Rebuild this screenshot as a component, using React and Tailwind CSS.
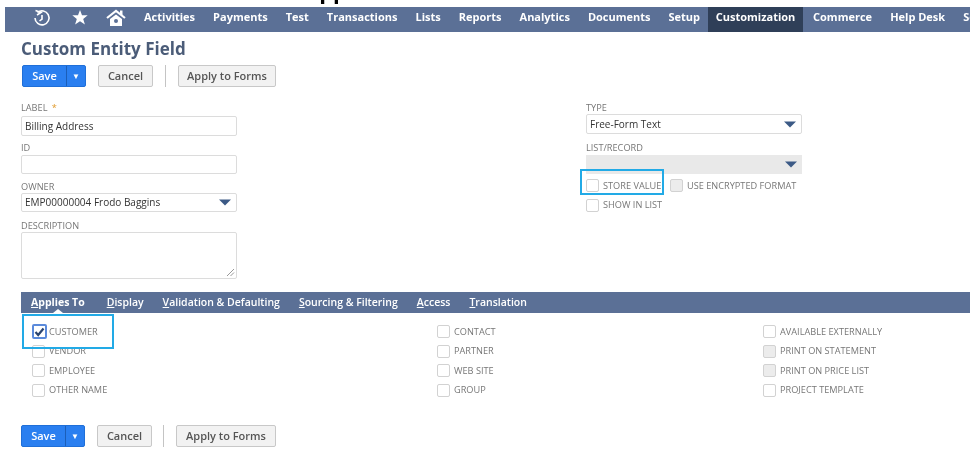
import React from "react";

const font = { fontFamily: '"Open Sans", "Liberation Sans", sans-serif' };

const Arrow = () => (
  <svg width="12" height="7" viewBox="0 0 12 7" className="shrink-0">
    <path d="M0 0.5H12L6 6.5Z" fill="#3c5a86" />
  </svg>
);

function Buttons({ compact }) {
  return (
    <div className="flex items-center">
      <div className="flex h-[22px] w-[64px] items-stretch overflow-hidden rounded-[2px] border border-[#1f6fd8] bg-[#2a7ff0] text-[11px] font-semibold text-white">
        <span className="flex w-[43px] items-center justify-center">Save</span>
        <span className="flex flex-1 items-center justify-center border-l border-[#1b5eb8] text-[8px]">▼</span>
      </div>
      <div className="ml-[12px] flex h-[22px] w-[55px] items-center justify-center rounded-[2px] border border-[#c8c8c8] bg-[#f2f2f2] text-[11px] font-semibold text-[#555]">Cancel</div>
      <div className={`${compact ? "ml-[11px] mr-[12px]" : "ml-[12px] mr-[12px]"} h-[22px] w-px bg-[#c4c4c4]`} />
      <div className={`${compact ? "w-[100px]" : "w-[98px]"} flex h-[22px] items-center justify-center rounded-[2px] border border-[#c8c8c8] bg-[#f2f2f2] text-[11px] font-semibold text-[#555]`}>Apply to Forms</div>
    </div>
  );
}

const Label = ({ children, className = "" }) => (
  <div className={`h-[11px] text-[9.2px] uppercase leading-[11px] text-[#777] ${className}`}>{children}</div>
);

const Box = ({ disabled, checked }) =>
  checked ? (
    <div className="flex h-[15px] w-[15px] shrink-0 items-center justify-center rounded-[2px] border-2 border-[#5b8adb] bg-white">
      <svg width="11" height="10" viewBox="0 0 11 10">
        <path d="M1.5 5L4.2 8L9.5 1.5" fill="none" stroke="#2b4470" strokeWidth="2.2" />
      </svg>
    </div>
  ) : (
    <div className={`h-[13px] w-[13px] shrink-0 rounded-[2px] border border-[#d2d2d2] ${disabled ? "bg-[#ececec]" : "bg-white"}`} />
  );

const Check = ({ children, disabled, checked }) => (
  <div className="flex h-[19.5px] items-center">
    <Box disabled={disabled} checked={checked} />
    <span className={`${checked ? "ml-[2px]" : "ml-[4px]"} text-[9.2px] uppercase text-[#777]`}>{children}</span>
  </div>
);

const fieldCls = "flex w-[216px] items-center rounded-[2px] border border-[#dcdcdc] bg-white px-[3px] text-[10px] text-[#333]";

const nav = ["Activities", "Payments", "Test", "Transactions", "Lists", "Reports", "Analytics", "Documents", "Setup"];
const tabs = [
  ["D", "isplay"],
  ["V", "alidation & Defaulting"],
  ["S", "ourcing & Filtering"],
  ["A", "ccess"],
  ["T", "ranslation"],
];

export default function App() {
  return (
    <div className="relative h-[467px] w-[975px] overflow-hidden bg-white blur-[0.6px]" style={font}>
      {/* clipped line of text above the frame */}
      <div className="absolute left-[304px] top-0 h-[4px] w-[60px] overflow-hidden">
        <div className="-mt-[23px] text-[22px] font-bold leading-[26px] text-black">Applies</div>
      </div>

      {/* top nav */}
      <div className="ml-[5px] mt-[7px] flex h-[25px] w-[965px] items-stretch overflow-hidden bg-[#5b7096] text-[11px] font-bold text-white">
        <div className="flex items-center pb-[4px]">
          <svg width="20" height="18" viewBox="0 0 20 18" className="ml-[27px] shrink-0" fill="none" stroke="#fff" strokeWidth="1.6">
            <path d="M5.5 3.5A7 7 0 1 1 3 9" />
            <path d="M3.5 1.5L9 3.5L5 6" />
            <path d="M10 6V10L7.5 12" />
          </svg>
          <svg width="16" height="15" viewBox="0 0 16 15" className="ml-[20px] shrink-0">
            <path d="M8 0L10 5.3H15.7L11.2 8.9L12.9 14.6L8 11.3L3.1 14.6L4.8 8.9L0.3 5.3H6Z" fill="#fff" />
          </svg>
          <svg width="20" height="18" viewBox="0 0 20 18" className="ml-[18px] shrink-0">
            <path d="M1 9L10 2L19 9" fill="none" stroke="#fff" strokeWidth="2.2" />
            <path d="M14 1.5H16.5V6H14Z" fill="#fff" />
            <path d="M4 10L10 5.5L16 10V17H4Z" fill="#fff" />
            <circle cx="10" cy="12" r="2" fill="#5b7096" />
          </svg>
        </div>
        <div className="ml-[18px] flex items-center gap-[18px] whitespace-nowrap pb-[4px]">
          {nav.map((n) => (
            <span key={n}>{n}</span>
          ))}
        </div>
        <div className="ml-[8px] flex w-[95px] shrink-0 items-center justify-center bg-[#2f3f58] pb-[4px]">Customization</div>
        <div className="ml-[10px] flex items-center gap-[18px] whitespace-nowrap pb-[4px]">
          <span>Commerce</span>
          <span>Help Desk</span>
          <span>Setup</span>
        </div>
      </div>

      <div className="pl-[21px]">
        <h1 className="mt-[6px] h-[21px] text-[17px] font-bold leading-[21px] text-[#4b5c78]">Custom Entity Field</h1>
        <div className="ml-[1px] mt-[6px]"><Buttons /></div>

        {/* form */}
        <div className="mt-[15px] flex">
          <div className="w-[565px]">
            <Label>Label <span className="ml-[2px] text-[#e09a2b]">*</span></Label>
            <div className={`${fieldCls} mt-[3px] h-[20px]`}>Billing Address</div>
            <Label className="mt-[6px]">ID</Label>
            <div className={`${fieldCls} mt-[2px] h-[19px]`} />
            <Label className="mt-[7px]">Owner</Label>
            <div className={`${fieldCls} mt-[1px] h-[19px] justify-between pr-[5px]`}>
              <span>EMP00000004 Frodo Baggins</span>
              <Arrow />
            </div>
            <Label className="mt-[8px]">Description</Label>
            <div className={`${fieldCls} relative mt-[1px] h-[47px]`}>
              <svg width="9" height="9" viewBox="0 0 9 9" className="absolute bottom-[1px] right-[1px]">
                <path d="M1 8L8 1M4.5 8L8 4.5" stroke="#999" strokeWidth="1" />
              </svg>
            </div>
          </div>
          <div className="w-[320px]">
            <Label>Type</Label>
            <div className={`${fieldCls} mt-[1px] h-[20px] justify-between pr-[5px]`}>
              <span>Free-Form Text</span>
              <Arrow />
            </div>
            <Label className="mt-[8px]">List/Record</Label>
            <div className="mt-[2px] flex h-[19px] w-[216px] items-center justify-end bg-[#e9e9e9] pr-[5px]">
              <Arrow />
            </div>
            <div className="mt-[2px] flex">
              <div className="w-[84px]"><Check>Store Value</Check></div>
              <Check disabled>Use Encrypted Format</Check>
            </div>
            <Check>Show in List</Check>
          </div>
        </div>

        {/* tabs */}
        <div className="relative mt-[13px] flex h-[21px] w-[949px] items-center bg-[#5b7096] pl-[10px] text-[10.5px] font-semibold text-white">
          <span className="font-bold"><span className="underline">A</span>pplies To</span>
          <div className="absolute bottom-0 left-[32px] h-0 w-0 border-x-[5px] border-b-[4px] border-x-transparent border-b-white" />
          <div className="ml-[22px] flex gap-[19px] whitespace-nowrap">
            {tabs.map(([a, b]) => (
              <span key={a}><span className="underline">{a}</span>{b}</span>
            ))}
          </div>
        </div>

        {/* applies to */}
        <div className="mt-[9px] flex pl-[11px]">
          <div className="w-[405px]">
            <Check checked>Customer</Check>
            <Check>Vendor</Check>
            <Check>Employee</Check>
            <Check>Other Name</Check>
          </div>
          <div className="w-[326px]">
            <Check>Contact</Check>
            <Check>Partner</Check>
            <Check>Web Site</Check>
            <Check>Group</Check>
          </div>
          <div>
            <Check>Available Externally</Check>
            <Check disabled>Print on Statement</Check>
            <Check disabled>Print on Price List</Check>
            <Check>Project Template</Check>
          </div>
        </div>

        <div className="mt-[25px]"><Buttons compact /></div>
      </div>

      {/* callouts */}
      <div className="pointer-events-none absolute left-[580px] top-[169px] h-[26px] w-[84px] border-2 border-[#22aae6]" />
      <div className="pointer-events-none absolute left-[22px] top-[314px] h-[35px] w-[92px] border-2 border-[#22aae6]" />
    </div>
  );
}
